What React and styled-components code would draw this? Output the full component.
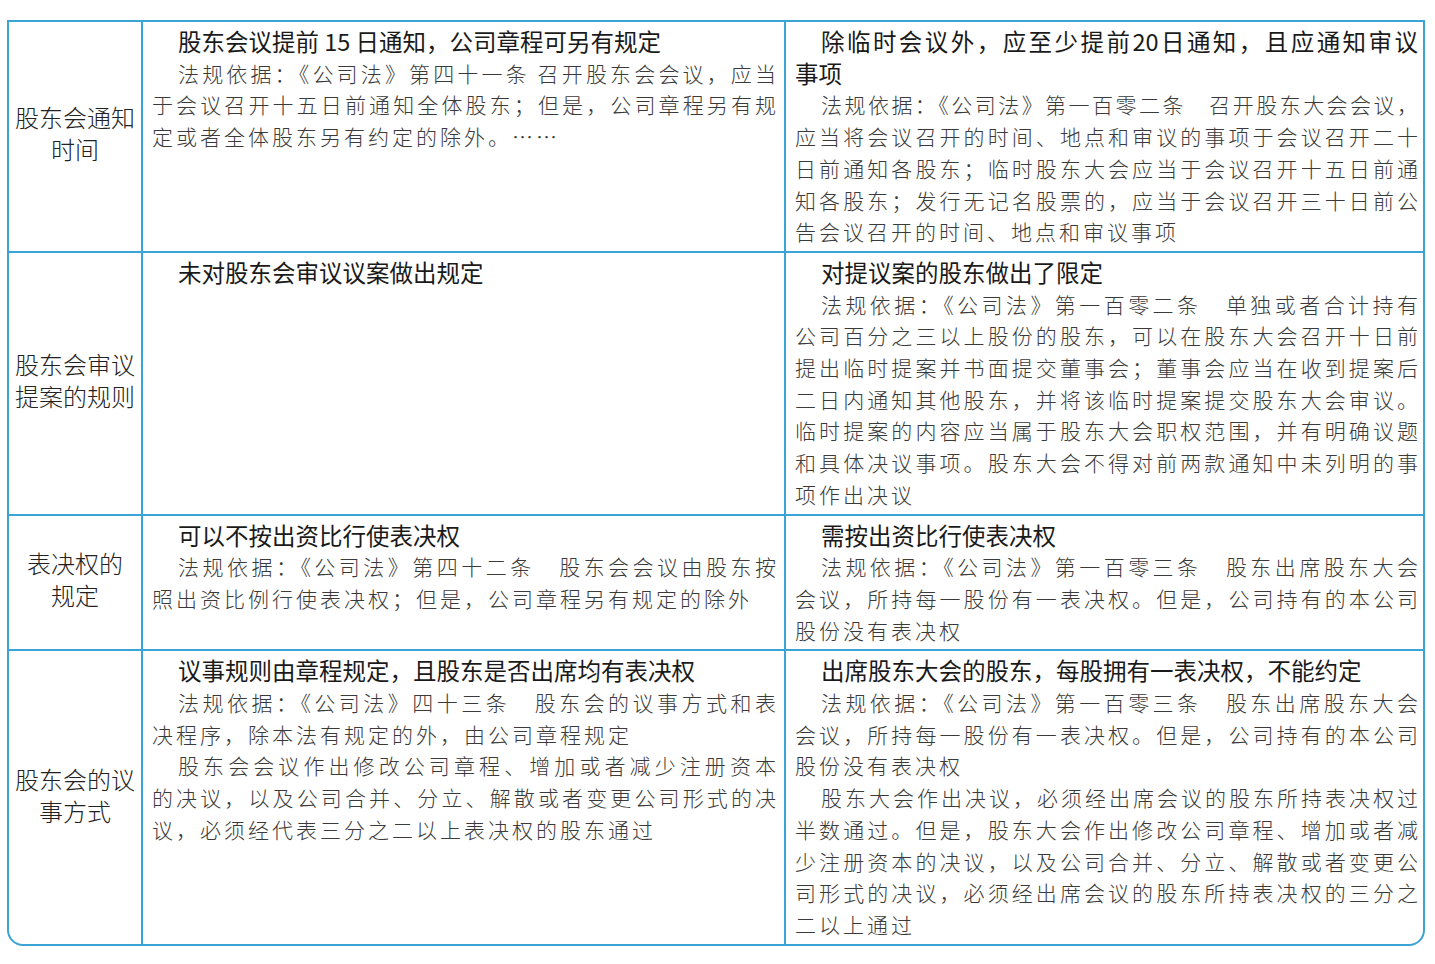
import styled, { createGlobalStyle } from 'styled-components';

const GlobalStyle = createGlobalStyle`
  body {
    margin: 0;
    background: #ffffff;
    font-family: "Noto Sans CJK SC", "Noto Sans", sans-serif;
  }
`

// each row: label lines, then the visual lines of the two comparison cells
// kind: head | body, indent: first line of a paragraph, full: justified to the edge
const rows = [
  {
    label: ['股东会通知', '时间'],
    left: [
      { kind: 'head', indent: true, text: '股东会议提前 15 日通知，公司章程可另有规定' },
      { kind: 'body', indent: true, full: true, text: '法规依据：《公司法》第四十一条 召开股东会会议，应当' },
      { kind: 'body', full: true, text: '于会议召开十五日前通知全体股东；但是，公司章程另有规' },
      { kind: 'body', text: '定或者全体股东另有约定的除外。……' },
    ],
    right: [
      { kind: 'head', indent: true, full: true, text: '除临时会议外，应至少提前20日通知，且应通知审议' },
      { kind: 'head', text: '事项' },
      { kind: 'body', indent: true, full: true, text: '法规依据：《公司法》第一百零二条　召开股东大会会议，' },
      { kind: 'body', full: true, text: '应当将会议召开的时间、地点和审议的事项于会议召开二十' },
      { kind: 'body', full: true, text: '日前通知各股东；临时股东大会应当于会议召开十五日前通' },
      { kind: 'body', full: true, text: '知各股东；发行无记名股票的，应当于会议召开三十日前公' },
      { kind: 'body', text: '告会议召开的时间、地点和审议事项' },
    ],
  },
  {
    label: ['股东会审议', '提案的规则'],
    left: [
      { kind: 'head', indent: true, text: '未对股东会审议议案做出规定' },
    ],
    right: [
      { kind: 'head', indent: true, text: '对提议案的股东做出了限定' },
      { kind: 'body', indent: true, full: true, text: '法规依据：《公司法》第一百零二条　单独或者合计持有' },
      { kind: 'body', full: true, text: '公司百分之三以上股份的股东，可以在股东大会召开十日前' },
      { kind: 'body', full: true, text: '提出临时提案并书面提交董事会；董事会应当在收到提案后' },
      { kind: 'body', full: true, text: '二日内通知其他股东，并将该临时提案提交股东大会审议。' },
      { kind: 'body', full: true, text: '临时提案的内容应当属于股东大会职权范围，并有明确议题' },
      { kind: 'body', full: true, text: '和具体决议事项。股东大会不得对前两款通知中未列明的事' },
      { kind: 'body', text: '项作出决议' },
    ],
  },
  {
    label: ['表决权的', '规定'],
    left: [
      { kind: 'head', indent: true, text: '可以不按出资比行使表决权' },
      { kind: 'body', indent: true, full: true, text: '法规依据：《公司法》第四十二条　股东会会议由股东按' },
      { kind: 'body', text: '照出资比例行使表决权；但是，公司章程另有规定的除外' },
    ],
    right: [
      { kind: 'head', indent: true, text: '需按出资比行使表决权' },
      { kind: 'body', indent: true, full: true, text: '法规依据：《公司法》第一百零三条　股东出席股东大会' },
      { kind: 'body', full: true, text: '会议，所持每一股份有一表决权。但是，公司持有的本公司' },
      { kind: 'body', text: '股份没有表决权' },
    ],
  },
  {
    label: ['股东会的议', '事方式'],
    left: [
      { kind: 'head', indent: true, text: '议事规则由章程规定，且股东是否出席均有表决权' },
      { kind: 'body', indent: true, full: true, text: '法规依据：《公司法》四十三条　股东会的议事方式和表' },
      { kind: 'body', text: '决程序，除本法有规定的外，由公司章程规定' },
      { kind: 'body', indent: true, full: true, text: '股东会会议作出修改公司章程、增加或者减少注册资本' },
      { kind: 'body', full: true, text: '的决议，以及公司合并、分立、解散或者变更公司形式的决' },
      { kind: 'body', text: '议，必须经代表三分之二以上表决权的股东通过' },
    ],
    right: [
      { kind: 'head', indent: true, text: '出席股东大会的股东，每股拥有一表决权，不能约定' },
      { kind: 'body', indent: true, full: true, text: '法规依据：《公司法》第一百零三条　股东出席股东大会' },
      { kind: 'body', full: true, text: '会议，所持每一股份有一表决权。但是，公司持有的本公司' },
      { kind: 'body', text: '股份没有表决权' },
      { kind: 'body', indent: true, full: true, text: '股东大会作出决议，必须经出席会议的股东所持表决权过' },
      { kind: 'body', full: true, text: '半数通过。但是，股东大会作出修改公司章程、增加或者减' },
      { kind: 'body', full: true, text: '少注册资本的决议，以及公司合并、分立、解散或者变更公' },
      { kind: 'body', full: true, text: '司形式的决议，必须经出席会议的股东所持表决权的三分之' },
      { kind: 'body', text: '二以上通过' },
    ],
  },
]

function App(){
    return(
        <Page>
          <GlobalStyle/>
          <CompareTable>
            {rows.map((row,i)=>(
              [
                <LabelCell key={'l'+i}>
                  {row.label.map((t,j)=><LabelLine key={j}>{t}</LabelLine>)}
                </LabelCell>,
                <TextCell key={'a'+i}>
                  {row.left.map((ln,j)=>(
                    <Line key={j} $kind={ln.kind} $indent={ln.indent} $full={ln.full}>{ln.text}</Line>
                  ))}
                </TextCell>,
                <TextCell key={'b'+i} $right>
                  {row.right.map((ln,j)=>(
                    <Line key={j} $kind={ln.kind} $indent={ln.indent} $full={ln.full}>{ln.text}</Line>
                  ))}
                </TextCell>
              ]
            ))}
          </CompareTable>
        </Page>
    )
}

export default App

const Page = styled.div`
  width:1435px;
  min-height:964px;
  padding:20px 0 0 7px;
  box-sizing:border-box;
`
const CompareTable = styled.div`
  width:1418px;
  box-sizing:border-box;
  display:grid;
  grid-template-columns:132px 641px 637px;
  gap:2px;
  background:#3ba4d6;
  border:2px solid #3ba4d6;
  border-radius:0 0 16px 16px;
  overflow:hidden;
`
const LabelCell = styled.div`
  background:#fff;
  display:flex;
  flex-direction:column;
  align-items:center;
  justify-content:center;
  padding:0 2px 6px;
`
const LabelLine = styled.div`
  font-size:24px;
  line-height:32px;
  font-weight:300;
  color:#222;
  white-space:nowrap;
`
const TextCell = styled.div`
  background:#fff;
  padding:4px ${p=>p.$right ? '5px' : '8px'} 3px 9px;
  min-width:0;
`
const Line = styled.div`
  line-height:31.7px;
  white-space:nowrap;
  padding-left:${p=>p.$indent ? '26px' : '0'};
  font-size:${p=>p.$kind==='head' ? '23.5px' : '21px'};
  font-weight:${p=>p.$kind==='head' ? 400 : 300};
  color:${p=>p.$kind==='head' ? '#1a1a1a' : '#3a3a3a'};
  letter-spacing:${p=>p.$full ? '0' : (p.$kind==='head' ? '0' : '3px')};
  text-align:${p=>p.$full ? 'justify' : 'left'};
  text-align-last:${p=>p.$full ? 'justify' : 'auto'};
  text-justify:inter-character;
`
